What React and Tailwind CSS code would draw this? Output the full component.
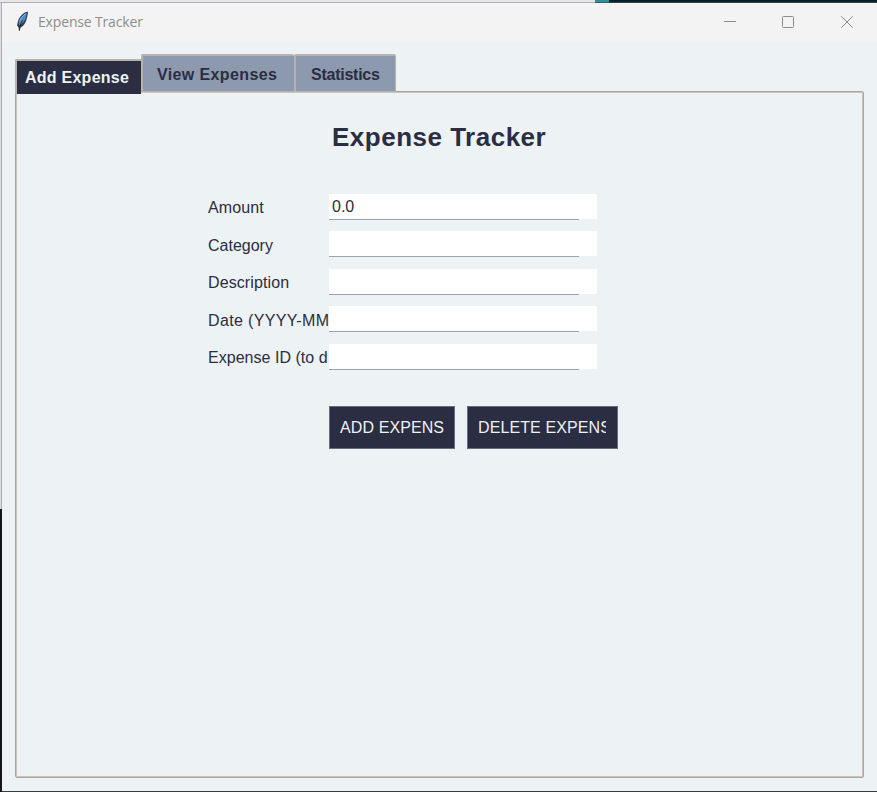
const FIELDS = [
  { label: "Amount", value: "0.0", tracking: "tracking-[0.1px]" },
  { label: "Category", value: "", tracking: "tracking-normal" },
  { label: "Description", value: "", tracking: "tracking-[0.1px]" },
  { label: "Date (YYYY-MM", value: "", tracking: "tracking-[0.35px]" },
  { label: "Expense ID (to d", value: "", tracking: "tracking-[0.03px]" },
];

function Feather() {
  return (
    <svg className="mt-[8px] ml-[14px] h-[21px] w-[13px] shrink-0" viewBox="0 0 13 21">
      <path d="M11.8 .6C8 1.2 3.4 5.5 2 10.2L1 14.5 2.6 16.5 3.2 20.2 4.7 16.6C8 14.6 10 11 10.8 7.4 11.4 5 12.1 3 11.8 .6Z" fill="#343b45" />
      <path d="M10.6 2C7.4 3.6 3.7 7.2 2.8 11.1L2.9 14.4C6.8 12.7 9.6 9.4 10.2 5.6Z" fill="#4689d2" />
      <path d="M10.2 2.4C7.2 4.3 4.4 7.4 3.5 10.5" stroke="#8db8df" strokeWidth="1" fill="none" />
      <path d="M6.6 9.2C5.2 11.4 4.2 13.4 3.2 19.5" stroke="#18202b" strokeWidth=".9" fill="none" />
    </svg>
  );
}

function TitleBar() {
  return (
    <header className="flex h-[39px] shrink-0 bg-[#f3f3f3]">
      <Feather />
      <span className="ml-[9px] mt-[8px] font-['Open_Sans','Noto_Sans',sans-serif] text-[14px] leading-[22px] tracking-[-0.16px] text-[#8d8d8d]">
        Expense Tracker
      </span>
      <svg className="ml-auto mr-[22px] mt-[11px] h-[16px] w-[132px]" viewBox="0 0 132 16" fill="none" stroke="#8b8b8b">
        <path d="M1 7.5H13" />
        <rect x="59.5" y="2.5" width="11" height="11" rx="1" />
        <path d="M118.3 2.3L129.7 13.7M129.7 2.3L118.3 13.7" />
      </svg>
    </header>
  );
}

function Tabs() {
  return (
    <nav className="relative z-10 flex h-[42px] items-start pl-[13px] pt-[1px] text-[16px] font-bold leading-[18px] text-[#2b2d42]">
      <div className="mt-[5px] h-[35px] w-[126px] shrink-0 rounded-tl-[2px] border-l-2 border-t-2 border-[#b7b3ac] bg-[#2b2d42] pl-[8px] pt-[8px] tracking-[0.25px] text-[#edf2f4]">
        Add Expense
      </div>
      <div className="flex h-[38px] w-[153px] shrink-0 rounded-t-[2px] border-b border-l-2 border-t-2 border-[#b7b3ac] bg-[#8d99ae] pl-[14px] pt-[10px] tracking-[0.38px]">
        View Expenses
      </div>
      <div className="flex h-[38px] w-[102px] shrink-0 rounded-t-[2px] border-b border-l-2 border-r border-t-2 border-[#b7b3ac] bg-[#8d99ae] pl-[15px] pt-[10px] tracking-[-0.25px]">
        Statistics
      </div>
    </nav>
  );
}

function Field({ label, value, tracking }) {
  return (
    <label className="flex h-[26.5px]">
      <span className={`w-[121px] shrink-0 whitespace-nowrap pt-[4.5px] text-[16px] leading-[20px] ${tracking}`}>
        {label}
      </span>
      <span className="flex w-[268px] flex-col">
        <span className="h-[25px] shrink-0 bg-white pl-[3px] pt-[3px] text-[16px] leading-[20px]">{value}</span>
        <span className="h-px w-[250px] bg-[#98a3b7]" />
      </span>
    </label>
  );
}

export default function App() {
  return (
    <div className="flex h-[792px] w-[877px] flex-col overflow-hidden bg-[#edf2f4] font-['Liberation_Sans',Arial,sans-serif] text-[#2b2d42]">
      <div className="flex h-[3px] shrink-0">
        <div className="w-[595px] border-b border-[#aeb1b5] bg-[#e6e6e6]" />
        <div className="w-[14px] border-b border-[#34646b] bg-[#2b9197]" />
        <div className="flex-1 border-b border-[#34444d] bg-[#07202c]" />
      </div>
      <div className="flex min-h-0 flex-1">
        <div className="flex w-[2px] shrink-0 flex-col">
          <div className="h-[506px] border-r border-[#aaaeb2] bg-[#dedede]" />
          <div className="flex-1 bg-[#16171a]" />
        </div>
        <main className="flex min-w-0 flex-1 flex-col border-b border-[#3a3b3d]">
          <TitleBar />
          <div className="flex flex-1 flex-col pt-[11px]">
            <Tabs />
            <section className="ml-[13px] mt-[-4px] h-[687px] w-[849px] rounded-[2px] border border-[#aaa69e]">
              <div className="h-full border border-[#c9c4bc]">
                <h1 className="ml-[315px] mt-[29px] whitespace-nowrap text-[26px] font-bold leading-[30px] tracking-[0.5px]">
                  Expense Tracker
                </h1>
                <form className="ml-[191px] mt-[41.5px] flex flex-col gap-[11px]">
                  {FIELDS.map((field) => (
                    <Field key={field.label} {...field} />
                  ))}
                </form>
                <div className="ml-[312px] mt-[35.5px] flex gap-[12px] text-[16px] leading-[20px] text-[#edf2f4]">
                  <button type="button" className="flex h-[43px] w-[126px] border border-[#6b6c7b] bg-[#2b2d42] px-[10px] pt-[11px]">
                    <span className="whitespace-nowrap tracking-[0.1px]">ADD EXPENS</span>
                  </button>
                  <button type="button" className="flex h-[43px] w-[151px] border border-[#6b6c7b] bg-[#2b2d42] px-[10px] pt-[11px]">
                    <span className="w-[128px] overflow-hidden whitespace-nowrap text-left tracking-[0.1px]">DELETE EXPENS</span>
                  </button>
                </div>
              </div>
            </section>
          </div>
        </main>
      </div>
    </div>
  );
}
